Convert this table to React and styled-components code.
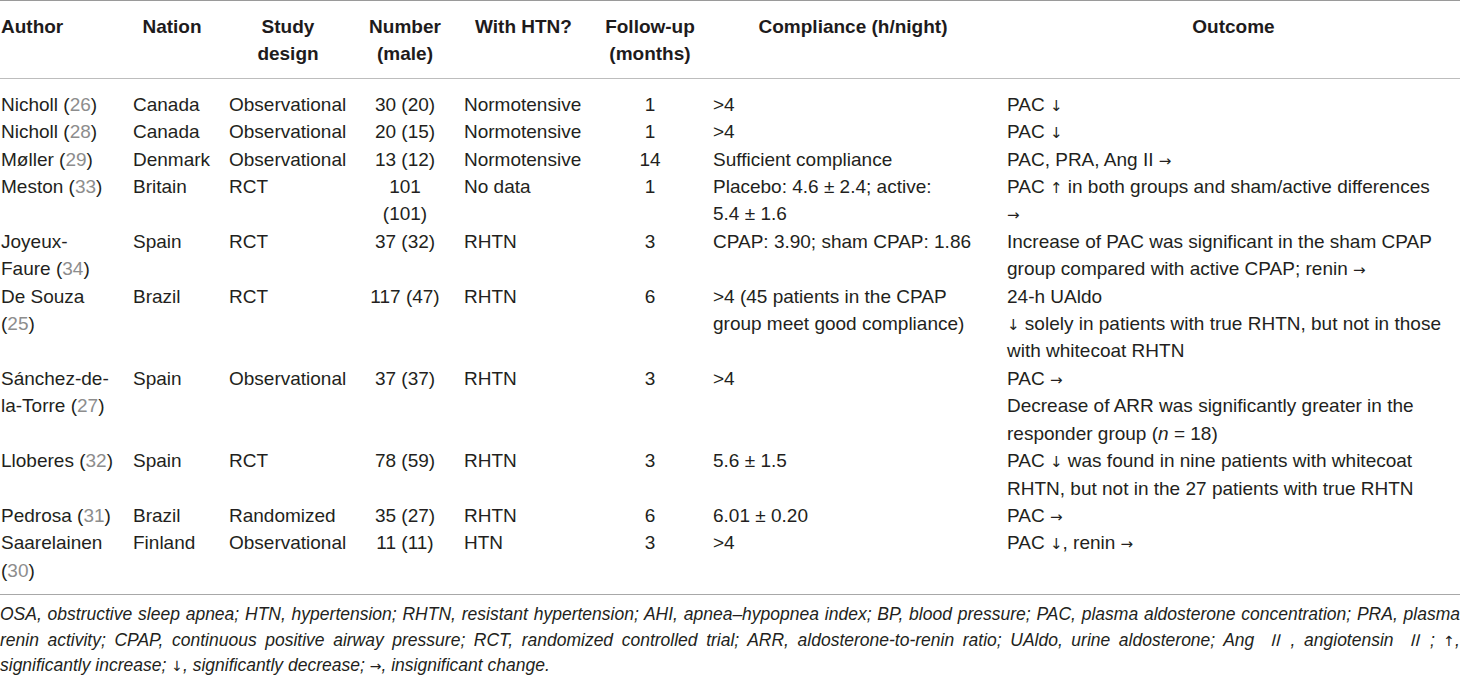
import React from "react";
import styled, { createGlobalStyle } from "styled-components";

const GlobalStyle = createGlobalStyle`
  html, body {
    margin: 0;
    padding: 0;
    background: #fff;
  }
  body {
    font-family: "Liberation Sans", Arial, Helvetica, sans-serif;
    color: #231f20;
  }
`;

// column boxes: width includes the right gutter
const columns = [
  { key: "author", w: 133, pl: 1, pr: 18, align: "left", head: "left" },
  { key: "nation", w: 96, pl: 0, pr: 18, align: "left", head: "center" },
  { key: "design", w: 138, pl: 0, pr: 20, align: "left", head: "center" },
  { key: "number", w: 97, pl: 0, pr: 21, align: "center", head: "center" },
  { key: "htn", w: 139, pl: 0, pr: 20, align: "left", head: "center" },
  { key: "follow", w: 110, pl: 0, pr: 16, align: "center", head: "center" },
  { key: "compliance", w: 294, pl: 0, pr: 14, align: "left", head: "center" },
  { key: "outcome", w: 453, pl: 0, pr: 7, headPr: 0, align: "left", head: "center" },
];

const Ref = styled.span`
  color: #8d8d8d;
`;

const Arrow = styled.span`
  font-family: "DejaVu Sans", sans-serif;
  font-style: normal;
  font-size: ${(p) => (p.$small ? 14 : 15)}px;
  line-height: 1;
  font-variant-emoji: text;
  color: #231f20;
`;

// wrap ↑ ↓ → in a text font so they don't fall back to a colour glyph
const arrows = (text, small) =>
  text.split(/([↑↓→])/).map((part, i) =>
    /[↑↓→]/.test(part) ? (
      <Arrow key={i} $small={small}>
        {part}
      </Arrow>
    ) : (
      part
    )
  );

const Author = ({ name, refNo }) => (
  <>
    {name} (<Ref>{refNo}</Ref>)
  </>
);

const rows = [
  {
    author: <Author name="Nicholl" refNo="26" />,
    nation: "Canada",
    design: "Observational",
    number: "30 (20)",
    htn: "Normotensive",
    follow: "1",
    compliance: ">4",
    outcome: "PAC ↓",
  },
  {
    author: <Author name="Nicholl" refNo="28" />,
    nation: "Canada",
    design: "Observational",
    number: "20 (15)",
    htn: "Normotensive",
    follow: "1",
    compliance: ">4",
    outcome: "PAC ↓",
  },
  {
    author: <Author name="Møller" refNo="29" />,
    nation: "Denmark",
    design: "Observational",
    number: "13 (12)",
    htn: "Normotensive",
    follow: "14",
    compliance: "Sufficient compliance",
    outcome: "PAC, PRA, Ang II →",
  },
  {
    author: <Author name="Meston" refNo="33" />,
    nation: "Britain",
    design: "RCT",
    number: "101 (101)",
    htn: "No data",
    follow: "1",
    compliance: "Placebo: 4.6\u00a0±\u00a02.4; active: 5.4\u00a0±\u00a01.6",
    outcome: (
      <>
        {arrows("PAC ↑ in both groups and sham/active differences")}
        <br />
        <Arrow>→</Arrow>
      </>
    ),
  },
  {
    author: <Author name="Joyeux-Faure" refNo="34" />,
    nation: "Spain",
    design: "RCT",
    number: "37 (32)",
    htn: "RHTN",
    follow: "3",
    compliance: "CPAP: 3.90; sham CPAP: 1.86",
    outcome:
      "Increase of PAC was significant in the sham CPAP group compared with active CPAP; renin →",
  },
  {
    author: <Author name="De Souza" refNo="25" />,
    nation: "Brazil",
    design: "RCT",
    number: "117 (47)",
    htn: "RHTN",
    follow: "6",
    compliance: ">4 (45 patients in the CPAP group meet good compliance)",
    outcome: (
      <>
        24-h UAldo
        <br />
        {arrows("↓ solely in patients with true RHTN, but not in those with whitecoat RHTN")}
      </>
    ),
  },
  {
    author: <Author name="Sánchez-de-la-Torre" refNo="27" />,
    nation: "Spain",
    design: "Observational",
    number: "37 (37)",
    htn: "RHTN",
    follow: "3",
    compliance: ">4",
    outcome: (
      <>
        {arrows("PAC →")}
        <br />
        Decrease of ARR was significantly greater in the responder group (<i>n</i> = 18)
      </>
    ),
  },
  {
    author: <Author name="Lloberes" refNo="32" />,
    nation: "Spain",
    design: "RCT",
    number: "78 (59)",
    htn: "RHTN",
    follow: "3",
    compliance: "5.6\u00a0±\u00a01.5",
    outcome:
      "PAC ↓ was found in nine patients with whitecoat RHTN, but not in the 27 patients with true RHTN",
  },
  {
    author: <Author name="Pedrosa" refNo="31" />,
    nation: "Brazil",
    design: "Randomized",
    number: "35 (27)",
    htn: "RHTN",
    follow: "6",
    compliance: "6.01\u00a0±\u00a00.20",
    outcome: "PAC →",
  },
  {
    author: <Author name="Saarelainen" refNo="30" />,
    nation: "Finland",
    design: "Observational",
    number: "11 (11)",
    htn: "HTN",
    follow: "3",
    compliance: ">4",
    outcome: "PAC ↓, renin →",
  },
];

const headers = {
  author: "Author",
  nation: "Nation",
  design: (
    <>
      Study
      <br />
      design
    </>
  ),
  number: (
    <>
      Number
      <br />
      (male)
    </>
  ),
  htn: "With HTN?",
  follow: (
    <>
      Follow-up
      <br />
      (months)
    </>
  ),
  compliance: "Compliance (h/night)",
  outcome: "Outcome",
};

export default function App() {
  return (
    <>
      <GlobalStyle />
      <Figure>
        <Table>
          <colgroup>
            {columns.map((c) => (
              <Col key={c.key} $w={c.w} />
            ))}
          </colgroup>
          <thead>
            <tr>
              {columns.map((c) => (
                <HeadCell
                  key={c.key}
                  $align={c.head}
                  $pl={c.pl}
                  $pr={c.headPr ?? c.pr}
                >
                  {headers[c.key]}
                </HeadCell>
              ))}
            </tr>
          </thead>
          <tbody>
            {rows.map((r, i) => (
              <tr key={i}>
                {columns.map((c) => (
                  <Cell key={c.key} $align={c.align} $pl={c.pl} $pr={c.pr}>
                    {typeof r[c.key] === "string" ? arrows(r[c.key]) : r[c.key]}
                  </Cell>
                ))}
              </tr>
            ))}
          </tbody>
        </Table>
        <Note>
          OSA, obstructive sleep apnea; HTN, hypertension; RHTN, resistant hypertension; AHI,
          apnea–hypopnea index; BP, blood pressure; PAC, plasma aldosterone concentration; PRA,
          plasma renin activity; CPAP, continuous positive airway pressure; RCT, randomized
          controlled trial; ARR, aldosterone-to-renin ratio; UAldo, urine aldosterone; Ang{" "}
          <Numeral>Ⅱ</Numeral>, angiotensin <Numeral>Ⅱ</Numeral>;{" "}
          {arrows("↑, significantly increase; ↓, significantly decrease; →, insignificant change.", true)}
        </Note>
      </Figure>
    </>
  );
}

const Figure = styled.section`
  width: 1460px;
`;

const Table = styled.table`
  width: 1460px;
  table-layout: fixed;
  border-collapse: collapse;
  border-top: 1px solid #9a9a9a;
  border-bottom: 1px solid #a8a8a8;
  font-size: 19px;
  line-height: 27.4px;
`;

const Col = styled.col`
  width: ${(p) => p.$w}px;
`;

const HeadCell = styled.th`
  padding: 12px ${(p) => p.$pr}px 10px ${(p) => p.$pl}px;
  text-align: ${(p) => p.$align};
  vertical-align: top;
  font-weight: 700;
  color: #1e1b1c;
  border-bottom: 1px solid #bdbdbd;
`;

const Cell = styled.td`
  padding: 0 ${(p) => p.$pr}px 0 ${(p) => p.$pl}px;
  text-align: ${(p) => p.$align};
  vertical-align: top;
  font-weight: 400;

  tr:first-child > & {
    padding-top: 12px;
  }
  tr:last-child > & {
    padding-bottom: 10px;
  }
`;

const Note = styled.p`
  margin: 0;
  padding-top: 7px;
  font-size: 17.5px;
  line-height: 25.5px;
  font-style: italic;
  text-align: justify;
  color: #231f20;
`;

const Numeral = styled.span`
  font-family: "Noto Sans CJK JP", "DejaVu Sans", sans-serif;
  font-style: italic;
  font-size: 16px;
  line-height: 1;
  margin: 0 4px;
`;
